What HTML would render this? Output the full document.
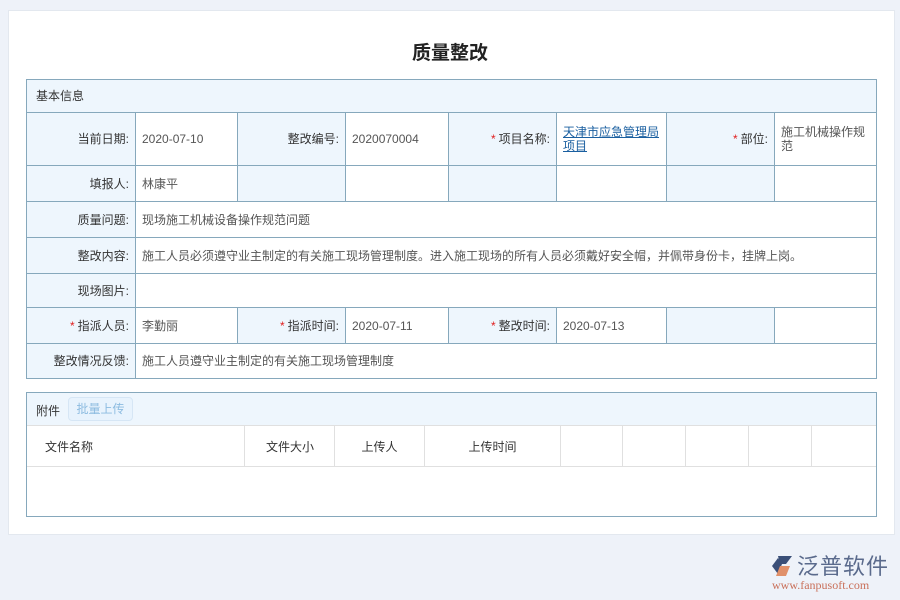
<!DOCTYPE html>
<html><head><meta charset="utf-8"><style>
*{margin:0;padding:0;box-sizing:border-box}
body{width:900px;height:600px;background:#eef2f9;font-family:"Liberation Sans","Noto Sans CJK SC",sans-serif;font-size:12px;color:#333;position:relative;overflow:hidden}
.card{position:absolute;left:8px;top:10px;width:887px;height:525px;background:#fff;border:1px solid #e3e8ef}
.t{position:absolute;left:0;top:38px;width:900px;text-align:center;font-size:19px;font-weight:bold;color:#222}
.c{position:absolute;border:1px solid #86a8bc;display:flex;align-items:center;padding:0 6px;line-height:14px}
.l{background:#eef6fd;justify-content:flex-end;color:#333}
.v{background:#fff;color:#555}
.s{color:#e02020;margin-right:3px}
a{color:#1a5fa0;text-decoration:underline}
.g{position:absolute;border:1px solid #e0e0e0;display:flex;align-items:center;justify-content:center;background:#fff}
</style></head><body>
<div class="card"></div>
<div class="t">质量整改</div>
<div class="c" style="left:26px;top:79px;width:851px;height:34px;background:#eef6fd;padding-left:9px">基本信息</div>

<div class="c l" style="left:26px;top:112px;width:110px;height:54px">当前日期:</div>
<div class="c v" style="left:135px;top:112px;width:103px;height:54px">2020-07-10</div>
<div class="c l" style="left:237px;top:112px;width:109px;height:54px">整改编号:</div>
<div class="c v" style="left:345px;top:112px;width:104px;height:54px">2020070004</div>
<div class="c l" style="left:448px;top:112px;width:109px;height:54px"><span class="s">*</span>项目名称:</div>
<div class="c v" style="left:556px;top:112px;width:111px;height:54px"><a>天津市应急管理局项目</a></div>
<div class="c l" style="left:666px;top:112px;width:109px;height:54px"><span class="s">*</span>部位:</div>
<div class="c v" style="left:774px;top:112px;width:103px;height:54px">施工机械操作规范</div>

<div class="c l" style="left:26px;top:165px;width:110px;height:37px">填报人:</div>
<div class="c v" style="left:135px;top:165px;width:103px;height:37px">林康平</div>
<div class="c l" style="left:237px;top:165px;width:109px;height:37px"></div>
<div class="c v" style="left:345px;top:165px;width:104px;height:37px"></div>
<div class="c l" style="left:448px;top:165px;width:109px;height:37px"></div>
<div class="c v" style="left:556px;top:165px;width:111px;height:37px"></div>
<div class="c l" style="left:666px;top:165px;width:109px;height:37px"></div>
<div class="c v" style="left:774px;top:165px;width:103px;height:37px"></div>

<div class="c l" style="left:26px;top:201px;width:110px;height:37px">质量问题:</div>
<div class="c v" style="left:135px;top:201px;width:742px;height:37px">现场施工机械设备操作规范问题</div>
<div class="c l" style="left:26px;top:237px;width:110px;height:37px">整改内容:</div>
<div class="c v" style="left:135px;top:237px;width:742px;height:37px">施工人员必须遵守业主制定的有关施工现场管理制度。进入施工现场的所有人员必须戴好安全帽，并佩带身份卡，挂牌上岗。</div>
<div class="c l" style="left:26px;top:273px;width:110px;height:35px">现场图片:</div>
<div class="c v" style="left:135px;top:273px;width:742px;height:35px"></div>

<div class="c l" style="left:26px;top:307px;width:110px;height:37px"><span class="s">*</span>指派人员:</div>
<div class="c v" style="left:135px;top:307px;width:103px;height:37px">李勤丽</div>
<div class="c l" style="left:237px;top:307px;width:109px;height:37px"><span class="s">*</span>指派时间:</div>
<div class="c v" style="left:345px;top:307px;width:104px;height:37px">2020-07-11</div>
<div class="c l" style="left:448px;top:307px;width:109px;height:37px"><span class="s">*</span>整改时间:</div>
<div class="c v" style="left:556px;top:307px;width:111px;height:37px">2020-07-13</div>
<div class="c l" style="left:666px;top:307px;width:109px;height:37px"></div>
<div class="c v" style="left:774px;top:307px;width:103px;height:37px"></div>
<div class="c l" style="left:26px;top:343px;width:110px;height:36px">整改情况反馈:</div>
<div class="c v" style="left:135px;top:343px;width:742px;height:36px">施工人员遵守业主制定的有关施工现场管理制度</div>

<div style="position:absolute;left:26px;top:392px;width:851px;height:125px;border:1px solid #86a8bc;background:#fff"></div>
<div style="position:absolute;left:27px;top:393px;width:849px;height:33px;background:#eef6fd;border-bottom:1px solid #e0e0e0"></div>
<div style="position:absolute;left:36px;top:402px">附件</div>
<div style="position:absolute;left:68px;top:397px;width:65px;height:24px;border:1px solid #d6e6f5;border-radius:4px;background:#e8f3fd;color:#8cbbe0;text-align:center;line-height:22px">批量上传</div>
<div class="g" style="left:27px;top:425px;width:218px;height:42px;justify-content:flex-start;padding-left:18px;border-left:none">文件名称</div>
<div class="g" style="left:244px;top:425px;width:91px;height:42px;justify-content:flex-end;padding-right:20px">文件大小</div>
<div class="g" style="left:334px;top:425px;width:91px;height:42px">上传人</div>
<div class="g" style="left:424px;top:425px;width:137px;height:42px">上传时间</div>
<div class="g" style="left:560px;top:425px;width:63px;height:42px"></div>
<div class="g" style="left:622px;top:425px;width:64px;height:42px"></div>
<div class="g" style="left:685px;top:425px;width:64px;height:42px"></div>
<div class="g" style="left:748px;top:425px;width:64px;height:42px"></div>
<div class="g" style="left:811px;top:425px;width:65px;height:42px;border-right:none"></div>

<svg style="position:absolute;left:770px;top:554px" width="26" height="24" viewBox="0 0 26 24"><path d="M8 2h14l-6 8H10z" fill="#3a4f78"/><path d="M2 12l6-8 4 6-4 10z" fill="#3a4f78"/><path d="M10 12h10l-4 10H6z" fill="#e0906a"/></svg>
<div style="position:absolute;left:797px;top:552px;font-size:22px;color:#5a6a8c;letter-spacing:1px;font-family:'Noto Sans CJK SC',sans-serif;line-height:26px">泛普软件</div>
<div style="position:absolute;left:772px;top:578px;font-size:12px;color:#c9705a;font-family:'Liberation Serif',serif">www.fanpusoft.com</div>
</body></html>
